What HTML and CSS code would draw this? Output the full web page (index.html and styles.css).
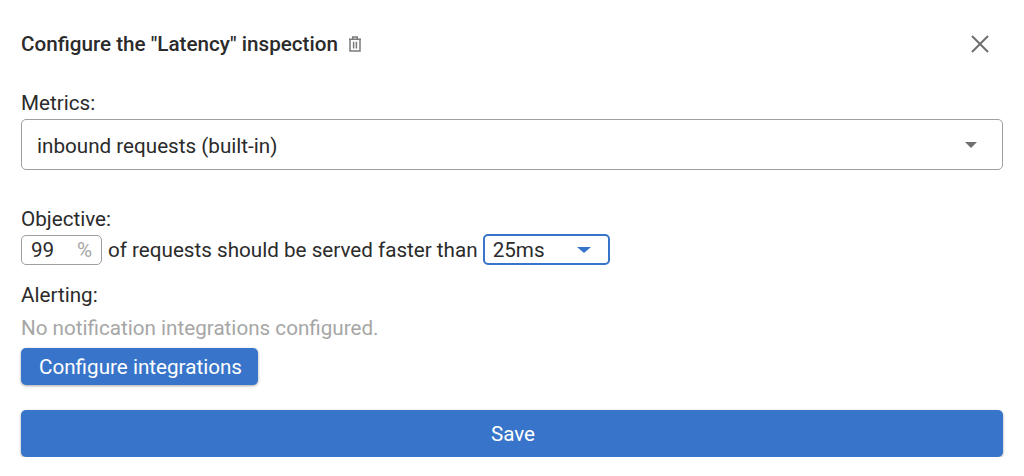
FILE: index.html
```html
<!doctype html>
<html lang="en">
<head>
<meta charset="utf-8" />
<title>Configure inspection</title>
<link rel="stylesheet" href="styles.css">
</head>
<body>

<div class="dialog">
	<header class="dialog-head">
		<h2>Configure the "Latency" inspection</h2>
		<svg class="trash" viewBox="0 0 14 16" width="14" height="16" fill="none" stroke="currentColor" stroke-width="1.5">
			<path d="M1 3.2h12M4.8 3V1h4.4V3M2 3.4V15h10V3.4M5.6 5.8v6.6M8.4 5.8v6.6" />
		</svg>
		<svg class="close" viewBox="0 0 18 18" width="18" height="18" fill="none" stroke="currentColor" stroke-width="2">
			<path d="M1 1l16 16M17 1L1 17" />
		</svg>
	</header>

	<label class="label metrics">Metrics:</label>
	<div class="select">
		<span>inbound requests (built-in)</span>
		<i class="caret"></i>
	</div>

	<label class="label objective">Objective:</label>
	<div class="sentence">
		<div class="percent"><span>99</span><em>%</em></div>
		<span>of requests should be served faster than</span>
		<div class="small-select"><span>25ms</span><i class="caret"></i></div>
	</div>

	<label class="label alerting">Alerting:</label>
	<p class="hint">No notification integrations configured.</p>
	<button class="btn">Configure integrations</button>

	<button class="btn save">Save</button>
</div>

</body>
</html>
```

FILE: styles.css
```css
:root {
	background-color: #fff;
	color: #2b2b2b;
	font-family: Roboto, "Liberation Sans", sans-serif;
	font-size: 20.65px;
}

body {
	margin: 0;
}

.dialog {
	display: flex;
	flex-direction: column;
	align-items: flex-start;
	padding: 30px 21px 0 21px;
}

.dialog-head {
	display: flex;
	align-items: center;
	align-self: stretch;
	height: 28px;
}

h2 {
	margin: 0;
	font-size: 20.65px;
	font-weight: 500;
}

.trash {
	margin-left: 10px;
	color: #7a7a7a;
}

.close {
	margin-left: auto;
	margin-right: 14px;
	color: #6f6f6f;
}

.label {
	line-height: 24px;
}

.metrics {
	margin-top: 33px;
}

.objective {
	margin-top: 37px;
}

.alerting {
	margin-top: 18px;
}

.select {
	display: flex;
	align-items: center;
	justify-content: space-between;
	align-self: stretch;
	box-sizing: border-box;
	height: 51px;
	margin-top: 4px;
	padding: 0 25px 0 15px;
	border: 1px solid #9f9f9f;
	border-radius: 5px;
}

.select span {
	margin-top: 2px;
}

.caret {
	display: block;
	width: 0;
	height: 0;
	border-left: 6px solid transparent;
	border-right: 6px solid transparent;
	border-top: 6px solid #6f6f6f;
}

.sentence {
	display: flex;
	align-items: center;
	gap: 6px;
	height: 31px;
	margin-top: 3px;
}

.percent {
	display: flex;
	align-items: center;
	justify-content: space-between;
	box-sizing: border-box;
	width: 81px;
	height: 30px;
	padding: 0 9px;
	border: 1px solid #9f9f9f;
	border-radius: 5px;
}

.percent em {
	font-style: normal;
	color: #a6a6a6;
}

.small-select {
	display: flex;
	align-items: center;
	justify-content: space-between;
	box-sizing: border-box;
	width: 127px;
	height: 31px;
	margin-left: -1px;
	padding: 0 17px 0 8px;
	border: 2px solid #3875ca;
	border-radius: 5px;
}

.small-select .caret {
	border-top-color: #3875ca;
	border-left-width: 7px;
	border-right-width: 7px;
	border-top-width: 6px;
}

.hint {
	margin: 9px 0 0 0;
	line-height: 24px;
	color: #a6a6a6;
}

.btn {
	display: block;
	height: 37px;
	margin-top: 8px;
	padding: 0 16px 0 18px;
	border: 0;
	border-radius: 5px;
	background-color: #3875ca;
	color: #fff;
	font-family: inherit;
	font-size: 20.65px;
	box-shadow: 0 1px 3px rgba(0, 0, 0, 0.35);
}

.save {
	align-self: stretch;
	height: 47px;
	margin-top: 25px;
}
```
